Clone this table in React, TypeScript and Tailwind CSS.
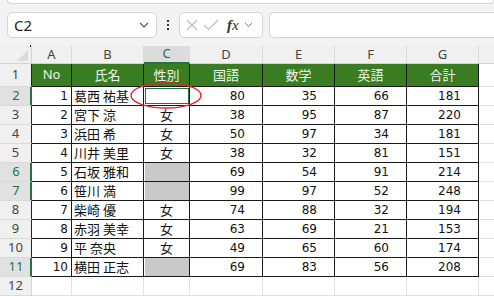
import React from "react";

const widths = ["w-[32px]", "w-[40px]", "w-[72px]", "w-[46px]", "w-[73px]", "w-[72px]", "w-[72px]", "w-[72px]"];
const letters = ["A", "B", "C", "D", "E", "F", "G"];
const heads = ["No", "氏名", "性別", "国語", "数学", "英語", "合計"];

type Row = { no: number; name: string; sex: string; kokugo: number; sugaku: number; eigo: number; total: number };

const data: Row[] = [
  { no: 1, name: "葛西 祐基", sex: "sel", kokugo: 80, sugaku: 35, eigo: 66, total: 181 },
  { no: 2, name: "宮下 涼", sex: "女", kokugo: 38, sugaku: 95, eigo: 87, total: 220 },
  { no: 3, name: "浜田 希", sex: "女", kokugo: 50, sugaku: 97, eigo: 34, total: 181 },
  { no: 4, name: "川井 美里", sex: "女", kokugo: 38, sugaku: 32, eigo: 81, total: 151 },
  { no: 5, name: "石坂 雅和", sex: "gray", kokugo: 69, sugaku: 54, eigo: 91, total: 214 },
  { no: 6, name: "笹川 満", sex: "gray", kokugo: 99, sugaku: 97, eigo: 52, total: 248 },
  { no: 7, name: "柴崎 優", sex: "女", kokugo: 74, sugaku: 88, eigo: 32, total: 194 },
  { no: 8, name: "赤羽 美幸", sex: "女", kokugo: 63, sugaku: 69, eigo: 21, total: 153 },
  { no: 9, name: "平 奈央", sex: "女", kokugo: 49, sugaku: 65, eigo: 60, total: 174 },
  { no: 10, name: "横田 正志", sex: "gray", kokugo: 69, sugaku: 83, eigo: 56, total: 208 },
];

const selectedRows = [2, 6, 7, 11];
const numFont = "font-['DejaVu_Sans','Noto_Sans_CJK_JP',sans-serif] text-[12px]";
const jpFont = "font-['Noto_Sans_CJK_JP',sans-serif] text-[13px]";
const uiFont = "font-['Noto_Sans','Liberation_Sans',sans-serif]";

function RowHeader({ n }: { n: number }) {
  const sel = selectedRows.includes(n);
  const inTable = n >= 1 && n <= 11;
  return (
    <div
      className={`${widths[0]} shrink-0 flex items-center justify-center border-b border-[#dadada] ${uiFont} text-[13px] ${
        sel
          ? "bg-[#e1e1e1] text-[#217346] border-r-2 border-r-[#217346]"
          : inTable
          ? "bg-[#f0f0f0] text-[#444] border-r border-r-[#222]"
          : "bg-[#f0f0f0] text-[#444] border-r border-r-[#d4d4d4]"
      }`}
    >
      <span className={sel ? "pl-[2px]" : ""}>{n}</span>
    </div>
  );
}

function Cell({ i, children, className = "" }: { i: number; children?: React.ReactNode; className?: string }) {
  return (
    <div className={`${widths[i + 1]} shrink-0 border-r border-b border-[#1a1a1a] flex items-center ${className}`}>
      {children}
    </div>
  );
}

function Tail({ className = "" }: { className?: string }) {
  return <div className={`flex-1 border-b border-[#e1e1e1] bg-white ${className}`} />;
}

export default function App() {
  return (
    <div className="relative w-[494px] h-[296px] overflow-hidden bg-white">
      {/* formula bar */}
      <div className="h-[46px] bg-[#f3f3f3] flex flex-col">
        <div className="h-[4px] ml-[7px] bg-white border border-t-0 border-[#d4d4d4] rounded-b-[6px]" />
        <div className="mt-[8px] flex items-center h-[26px]">
          <div className="ml-[7px] w-[150px] h-[26px] bg-white border border-[#d4d4d4] rounded-[5px] flex items-center justify-between pl-[6px] pr-[7px]">
            <span className={`${uiFont} text-[15px] text-[#222]`}>C2</span>
            <svg width="10" height="6" viewBox="0 0 10 6">
              <path d="M1 1 L5 5 L9 1" fill="none" stroke="#555" strokeWidth="1.2" />
            </svg>
          </div>
          <div className="w-[22px] flex flex-col items-center justify-center gap-[2px]">
            <span className="w-[2px] h-[2px] bg-[#333]" />
            <span className="w-[2px] h-[2px] bg-[#333]" />
            <span className="w-[2px] h-[2px] bg-[#333]" />
          </div>
          <div className="w-[84px] h-[26px] bg-white border border-[#d4d4d4] rounded-[5px] flex items-center pl-[6px] gap-[5px]">
            <svg width="12" height="12" viewBox="0 0 12 12">
              <path d="M1 1 L11 11 M11 1 L1 11" stroke="#bdbdbd" strokeWidth="1.1" />
            </svg>
            <svg width="16" height="12" viewBox="0 0 16 12">
              <path d="M1 6 L5.5 10.5 L15 1" fill="none" stroke="#bdbdbd" strokeWidth="1.1" />
            </svg>
            <span className="ml-[3px] font-['Liberation_Serif',serif] italic text-[15px] text-[#333] leading-none">
              <span className="font-bold">f</span>x
            </span>
            <svg width="9" height="6" viewBox="0 0 9 6">
              <path d="M1 1 L4.5 4.5 L8 1" fill="none" stroke="#777" strokeWidth="1" />
            </svg>
          </div>
          <div className="ml-[6px] flex-1 h-[26px] bg-white border border-r-0 border-[#d4d4d4] rounded-l-[5px]" />
        </div>
      </div>

      {/* column headers */}
      <div className="flex h-[18px] bg-[#f0f0f0]">
        <div className={`${widths[0]} shrink-0 relative border-r border-b border-[#d4d4d4]`}>
          <span className="absolute right-0 -top-px w-px h-[2px] bg-[#222]" />
          <svg className="absolute right-[3px] bottom-[2px]" width="11" height="11" viewBox="0 0 11 11">
            <path d="M11 0 L11 11 L0 11 Z" fill="#dcdcdc" />
          </svg>
        </div>
        {letters.map((l, i) => (
          <div
            key={l}
            className={`${widths[i + 1]} shrink-0 flex items-center justify-center border-r border-[#dadada] ${uiFont} text-[13px] ${
              l === "C" ? "bg-[#dcdcdc] text-[#217346] border-b-2 border-b-[#217346]" : "text-[#444] border-b border-b-[#d4d4d4]"
            }`}
          >
            {l}
          </div>
        ))}
        <div className="flex-1 border-b border-[#d4d4d4]" />
      </div>

      {/* row 1 headings */}
      <div className="flex h-[23px]">
        <RowHeader n={1} />
        {heads.map((h, i) => (
          <Cell key={h} i={i} className={`justify-center bg-[#3a7c22] text-[#eef4ea] ${i === 0 ? uiFont + " text-[13px]" : jpFont}`}>
            {h}
          </Cell>
        ))}
        <Tail />
      </div>

      {data.map((r, idx) => (
        <div key={r.no} className="flex h-[19px]">
          <RowHeader n={idx + 2} />
          <Cell i={0} className={`justify-end pr-[3px] text-[#111] ${numFont}`}>{r.no}</Cell>
          <Cell i={1} className={`pl-[2px] text-[#111] ${jpFont}`}>{r.name}</Cell>
          <Cell i={2} className={`justify-center text-[#111] ${jpFont}`}>
            {r.sex === "sel" ? (
              <div className="w-[44px] h-[16px] mb-px border-[1.5px] border-[#217346]" />
            ) : r.sex === "gray" ? (
              <div className="w-[44px] h-[18px] bg-[#c9c9c9]" />
            ) : (
              r.sex
            )}
          </Cell>
          {[r.kokugo, r.sugaku, r.eigo, r.total].map((v, k) => (
            <Cell key={k} i={3 + k} className={`justify-end pr-[17px] text-[#111] ${numFont}`}>
              {v}
            </Cell>
          ))}
          <Tail />
        </div>
      ))}

      {/* row 12 */}
      <div className="flex h-[19px]">
        <RowHeader n={12} />
        {letters.map((l, i) => (
          <div key={l} className={`${widths[i + 1]} shrink-0 border-r border-b border-[#e1e1e1]`} />
        ))}
        <Tail />
      </div>

      {/* red annotation ellipse */}
      <svg className="absolute left-[130px] top-[82px]" width="72" height="27" viewBox="0 0 72 27">
        <ellipse cx="36" cy="13.5" rx="35" ry="12.5" fill="none" stroke="#e8232a" strokeWidth="1.4" />
      </svg>
    </div>
  );
}
